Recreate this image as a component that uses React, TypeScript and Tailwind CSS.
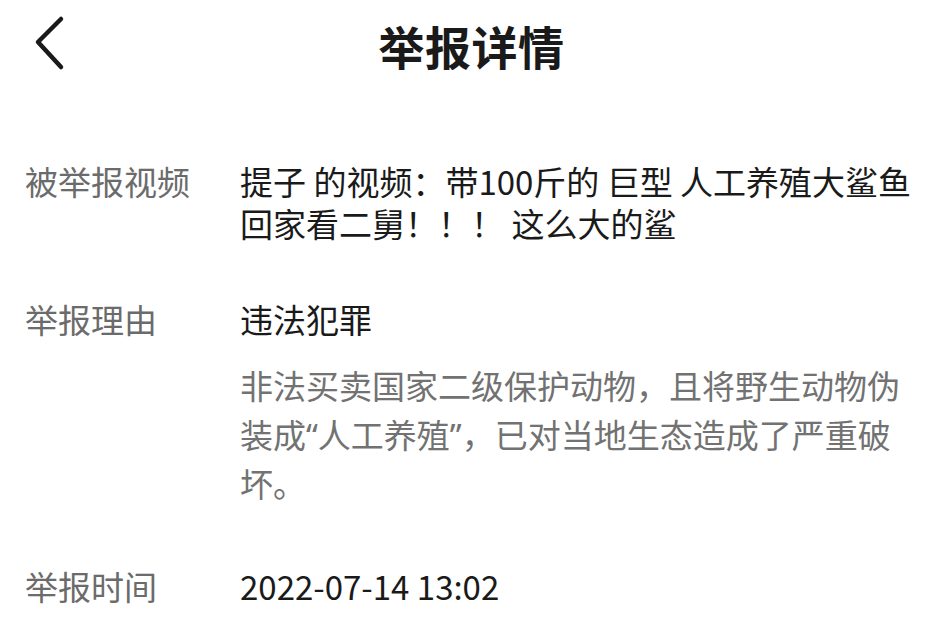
const FONT = '"Noto Sans CJK SC", "Noto Sans", sans-serif';

function BackIcon() {
  return (
    <svg width="40" height="60" viewBox="0 0 40 60" fill="none" aria-hidden="true">
      <path d="M30 4 L7 27 L30 52" stroke="#1a1a1a" strokeWidth="4.5" strokeLinecap="round" strokeLinejoin="round" />
    </svg>
  );
}

function Row({ label, children, className = '' }: { label: string; children: React.ReactNode; className?: string }) {
  return (
    <div className={`flex ${className}`}>
      <div className="w-[215px] shrink-0 text-[#6b6b6b]">{label}</div>
      <div className="flex-1 min-w-0">{children}</div>
    </div>
  );
}

export default function App() {
  return (
    <div className="w-[943px] h-[643px] bg-white overflow-hidden text-[33px] leading-[42px]" style={{ fontFamily: FONT }}>
      <header className="relative h-[90px] flex items-center justify-center">
        <button className="absolute left-[31px] top-[15px]" aria-label="返回">
          <BackIcon />
        </button>
        <h1 className="text-[46px] font-bold text-[#1a1a1a] tracking-[0.5px]">举报详情</h1>
      </header>

      <div className="pl-[25px] pr-[24px] pt-[70px]">
        <Row label="被举报视频">
          <p className="text-[#1a1a1a]">提子 的视频：带100斤的 巨型 人工养殖大鲨鱼回家看二舅！！！ 这么大的鲨</p>
        </Row>

        <Row label="举报理由" className="mt-[54px]">
          <p className="text-[#1a1a1a]">违法犯罪</p>
          {/* latin font first so the curly quotes come out narrow, CJK falls back */}
          <p className="mt-[22px] text-[#727272] leading-[49px] font-['Noto_Sans','Noto_Sans_CJK_SC',sans-serif]">
            非法买卖国家二级保护动物，且将野生动物伪装成“人工养殖”，已对当地生态造成了严重破坏。
          </p>
        </Row>

        <Row label="举报时间" className="mt-[56px]">
          <p className="text-[#1a1a1a]">2022-07-14 13:02</p>
        </Row>
      </div>
    </div>
  );
}
